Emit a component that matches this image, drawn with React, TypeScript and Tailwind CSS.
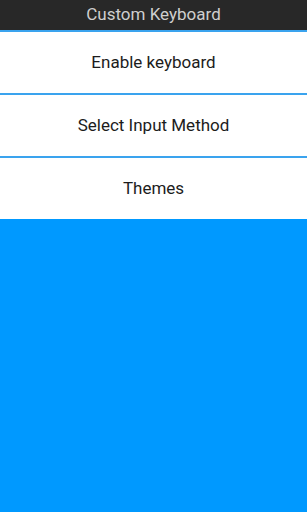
const items = ["Enable keyboard", "Select Input Method", "Themes"];

export default function App() {
  return (
    <div className="flex h-[512px] w-[307px] flex-col bg-[#0099ff] font-['Roboto',sans-serif]">
      <div className="flex h-[30px] items-center justify-center bg-[#282828] text-[17px] text-[#cfcfcf]">
        Custom Keyboard
      </div>
      {items.map((label) => (
        <div key={label} className="border-t-2 border-[#3aa3ee]">
          <div className="flex h-[61px] items-center justify-center bg-white pt-px text-[17px] text-[#1c1c1c]">
            {label}
          </div>
        </div>
      ))}
    </div>
  );
}
